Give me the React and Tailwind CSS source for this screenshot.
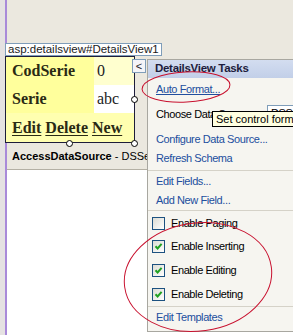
import React from 'react';

const sans = { fontFamily: '"Liberation Sans", Arial, sans-serif' };
const serif = { fontFamily: '"Liberation Serif", "Times New Roman", serif' };

const Handle = ({ x, y }) => (
  <div
    className="absolute w-[7px] h-[7px] rounded-full bg-white border border-black"
    style={{ left: x - 3, top: y - 3 }}
  />
);

const Check = ({ checked }) => (
  <div className="w-[13px] h-[13px] border border-[#1c5180] bg-gradient-to-br from-[#dcdcd4] to-white flex items-center justify-center">
    {checked && (
      <svg width="9" height="9" viewBox="0 0 9 9">
        <path d="M1.5 4.2 L3.6 6.4 L7.6 1.8" fill="none" stroke="#21a121" strokeWidth="2" />
      </svg>
    )}
  </div>
);

const LinkRow = ({ h, children, underline }) => (
  <div className={`flex items-center pl-[8px] text-[#214e9e] ${h}`}>
    <span className={underline ? 'underline' : ''}>{children}</span>
  </div>
);

const CheckRow = ({ h, checked, children }) => (
  <div className={`flex items-center gap-[6px] pl-[4px] text-black ${h}`}>
    <Check checked={checked} />
    <span>{children}</span>
  </div>
);

const Sep = () => <div className="h-px bg-[#d5d2c8]" />;

export default function App() {
  return (
    <div className="relative w-[293px] h-[335px] overflow-hidden bg-white flex" style={sans}>
      <div className="w-[5px] bg-[#e5e2e2]" />
      <div className="flex-1 flex flex-col border-l-2 border-[#a98ad9]">
        <div className="bg-[#ebe8df] pt-[43px] border-b border-[#b4b0a4] flex flex-col">
          <div className="-ml-[2px] self-start h-[13px] border border-[#7f9db9] bg-white px-[2px] text-[11.5px] leading-[11px] text-[#1a1a1a]">
            asp:detailsview#DetailsView1
          </div>
          <div className="-ml-[2px] w-[130px] h-[87px] border border-[#1d1d3a] flex flex-col" style={serif}>
            <div className="flex h-[28px]">
              <div className="w-[88px] bg-[#ffff9c] flex items-center pl-[6px] font-bold text-[16px] text-[#2a2a14]">CodSerie</div>
              <div className="flex-1 bg-[#ffffcf] flex items-center pl-[3px] text-[16px] text-[#222]">0</div>
            </div>
            <div className="flex h-[28px]">
              <div className="w-[88px] bg-[#ffff9c] flex items-center pl-[6px] font-bold text-[16px] text-[#2a2a14]">Serie</div>
              <div className="flex-1 bg-white flex items-center pl-[3px] text-[16px] text-[#222]">abc</div>
            </div>
            <div className="flex-1 bg-[#ffffb0] flex items-center gap-[4px] pl-[6px] font-bold text-[16px] text-[#2a2a14] underline-offset-2">
              <span className="underline">Edit</span>
              <span className="underline">Delete</span>
              <span className="underline">New</span>
            </div>
          </div>
          <div className="h-[26px] flex items-center pl-[5px] text-[11px] text-black whitespace-nowrap">
            <span className="font-bold">AccessDataSource</span>
            <span>&nbsp;- DSSeries</span>
          </div>
        </div>
      </div>

      <Handle x={69} y={143} />
      <Handle x={134} y={143} />
      <Handle x={134} y={99} />

      {/* smart tag button */}
      <div className="absolute left-[132px] top-[59px] w-[14px] h-[14px] border border-[#7f9db9] bg-[#f4f4f8] flex items-center justify-center text-[11px] leading-none text-[#222]">
        &lt;
      </div>

      {/* task panel */}
      <div className="absolute left-[147px] top-[59px] w-[160px] h-[273px] border border-[#a8a7a0] bg-[#f6f5f0] text-[11px] tracking-[-0.4px] whitespace-nowrap flex flex-col">
        <div className="h-[18px] bg-gradient-to-b from-[#d3ddf0] to-[#c2cfe8] flex items-center pl-[7px] font-bold text-[11.5px] tracking-[-0.3px] text-[#1d1d3c]">
          DetailsView Tasks
        </div>
        <LinkRow h="h-[22px]" underline>Auto Format...</LinkRow>
        <div className="relative h-[28px] flex items-center pl-[8px] text-black">
          Choose Data Source:
          <div className="absolute left-[119px] top-[5px] w-[60px] h-[18px] border border-[#7f9db9] bg-white pl-[3px] text-[11px] leading-[14px]">
            DSSeries
          </div>
        </div>
        <LinkRow h="h-[22px]">Configure Data Source...</LinkRow>
        <LinkRow h="h-[16px]">Refresh Schema</LinkRow>
        <div className="h-[4px]" />
        <Sep />
        <LinkRow h="h-[20px]">Edit Fields...</LinkRow>
        <LinkRow h="h-[19px]">Add New Field...</LinkRow>
        <Sep />
        <CheckRow h="h-[24px]">Enable Paging</CheckRow>
        <CheckRow h="h-[23px]" checked>Enable Inserting</CheckRow>
        <CheckRow h="h-[24px]" checked>Enable Editing</CheckRow>
        <CheckRow h="h-[24px]" checked>Enable Deleting</CheckRow>
        <Sep />
        <LinkRow h="h-[20px]">Edit Templates</LinkRow>
      </div>

      {/* tooltip */}
      <div className="absolute left-[212px] top-[111px] h-[16px] border border-black bg-[#ffffe1] px-[3px] text-[11px] leading-[14px] text-black whitespace-nowrap">
        Set control format
      </div>

      {/* red annotation ellipses */}
      <svg className="absolute left-0 top-0" width="293" height="335" viewBox="0 0 293 335">
        <ellipse cx="186" cy="87" rx="44" ry="15" fill="none" stroke="#c8102e" strokeWidth="1" transform="rotate(-3 186 87)" />
        <ellipse cx="198" cy="277" rx="74" ry="54" fill="none" stroke="#c8102e" strokeWidth="1" transform="rotate(-8 198 277)" />
      </svg>
    </div>
  );
}
